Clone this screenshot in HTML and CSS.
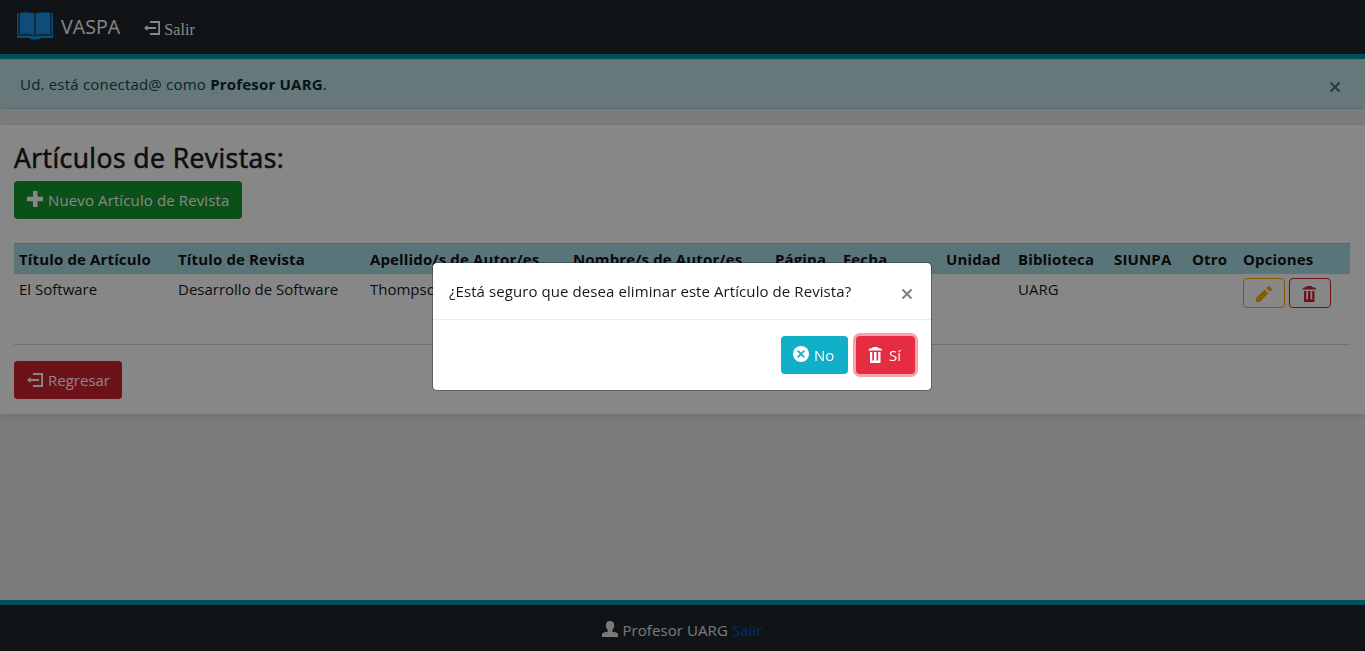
FILE: index.html
```html
<!DOCTYPE html>
<html lang="es">
<head>
<meta charset="utf-8">
<title>VASPA</title>
<link rel="stylesheet" href="styles.css">
</head>
<body>
<svg class="sprite" aria-hidden="true">
  <symbol id="i-exit" viewBox="0 0 16 16"><path d="M6 1h10v14H6v-2h8.200V3H6zM0 8l3.600-3v2H12v2H3.600v2z"/></symbol>
  <symbol id="i-trash" viewBox="0 0 16 16"><path d="M5 0h4.500l1 1.300H12q1.700.4 2.300 2.200H.2Q.8 1.700 2.500 1.300H4zM2 5h2.300v8.500h1.700V5h2.500v8.500h1.700V5h2.300v11H2z"/></symbol>
  <symbol id="i-plus" viewBox="0 0 16 16"><path d="M6 0h4.500v5.800H16v4.400h-5.500V16H6v-5.800H0V5.800h6z"/></symbol>
  <symbol id="i-pencil" viewBox="0 0 16 16"><path d="M0 12.200L8.700 3.500l3.800 3.800L3.800 16H0zM10.200 2l1.600-1.600q.8-.8 1.600 0L15.600 2.600q.8.800 0 1.600L14 5.800z"/></symbol>
  <symbol id="i-user" viewBox="0 0 16 16"><path d="M8 0c3 0 4.200 2 4.200 4.500 0 2-1 4-2.200 4.900v1.100c3 .6 6 1.200 6 3v2.500H0v-2.500c0-1.800 3-2.400 6-3V9.400C4.800 8.500 3.800 6.500 3.800 4.500 3.800 2 5 0 8 0z"/></symbol>
  <symbol id="i-cancel" viewBox="0 0 16 16"><circle cx="8" cy="8" r="8"/><path d="M4.700 4.700l6.600 6.600M11.300 4.700l-6.600 6.600" stroke="#10b0c8" stroke-width="1.800"/></symbol>
  <symbol id="i-times" viewBox="0 0 12 12"><path d="M1.500 1.500l9 9M10.500 1.500l-9 9" stroke="currentColor" stroke-width="2"/></symbol>
</svg>
<header class="navbar">
  <a class="brand">
    <svg class="book" viewBox="0 0 38 28"><path class="cover" d="M1 1h36v24H1z"/><path d="M1 1h1v23h34V1h1v25H24q0 1.500-2 1.500h-6q-2 0-2-1.500H1z"/><path d="M4 .8q9-1.500 14 1v21.400q-6-3-14-.5zM20 1.800q5-2.500 14-1v21.900q-8-2.500-14 .5z"/></svg>
    <span>VASPA</span>
  </a>
  <a class="nav-exit"><svg class="icon"><use href="#i-exit"/></svg><span>Salir</span></a>
</header>
<div class="alert">
  <p>Ud. está conectad@ como <b>Profesor UARG</b>.</p>
  <svg class="times"><use href="#i-times"/></svg>
</div>
<main class="card">
  <h1>Artículos de Revistas:</h1>
  <a class="btn success"><svg class="icon"><use href="#i-plus"/></svg><span>Nuevo Artículo de Revista</span></a>
  <table>
    <colgroup><col class="c1"><col class="c2"><col class="c3"><col class="c4"><col class="c5"><col class="c6"><col class="c7"><col class="c8"><col class="c9"><col class="c10"><col class="c11"></colgroup>
    <thead><tr><th>Título de Artículo</th><th>Título de Revista</th><th>Apellido/s de Autor/es</th><th>Nombre/s de Autor/es</th><th>Página</th><th>Fecha</th><th>Unidad</th><th>Biblioteca</th><th>SIUNPA</th><th>Otro</th><th>Opciones</th></tr></thead>
    <tbody><tr><td>El Software</td><td>Desarrollo de Software</td><td>Thompson</td><td></td><td></td><td></td><td></td><td>UARG</td><td></td><td></td>
      <td><div class="options"><a class="btn-sm edit"><svg class="icon"><use href="#i-pencil"/></svg></a><a class="btn-sm delete"><svg class="icon"><use href="#i-trash"/></svg></a></div></td></tr></tbody>
  </table>
  <a class="btn danger"><svg class="icon"><use href="#i-exit"/></svg><span>Regresar</span></a>
</main>
<footer class="footer"><svg class="icon"><use href="#i-user"/></svg><span>Profesor UARG <a>Salir</a></span></footer>
<div class="backdrop">
  <section class="modal" role="dialog">
    <div class="modal-header"><p>¿Está seguro que desea eliminar este Artículo de Revista?</p><svg class="times"><use href="#i-times"/></svg></div>
    <div class="modal-footer">
      <button class="btn info"><svg class="icon"><use href="#i-cancel"/></svg><span>No</span></button>
      <button class="btn danger focused"><svg class="icon"><use href="#i-trash"/></svg><span>Sí</span></button>
    </div>
  </section>
</div>
</body>
</html>
```
FILE: styles.css
```css
* { box-sizing: border-box; }
body {
  margin: 0;
  height: 651px;
  overflow: hidden;
  display: flex;
  flex-direction: column;
  background: #ebebeb;
  color: #16191c;
  font: 15px/24px "Open Sans", "Noto Sans", sans-serif;
}
p, h1 { margin: 0; }
svg { fill: currentColor; flex: none; }
.sprite { position: absolute; width: 0; height: 0; }
.icon { width: 16px; height: 16px; }
.times { width: 12px; height: 12px; }
.navbar {
  height: 59px;
  padding: 0 16px;
  display: flex;
  align-items: center;
  gap: 24px;
  background: #1f262a;
  border-bottom: 5px solid #0095a8;
  color: #fff;
}
.brand { display: flex; align-items: center; gap: 7px; font-size: 19.500px; letter-spacing: .1px; }
.book { width: 38px; height: 28px; color: #1b90e6; margin-bottom: 3px; }
.cover { fill: #1c4f7a; }
.nav-exit { display: flex; align-items: center; gap: 4px; font: 16px/24px "Liberation Serif", serif; padding-top: 6px; }
.nav-exit span { letter-spacing: .1px; }
.nav-exit .icon { margin-bottom: 5px; }
.alert {
  height: 50px;
  padding: 0 24px 0 20px;
  display: flex;
  align-items: center;
  justify-content: space-between;
  background: #c3e2e7;
  border: 1px solid #9fd0d9;
  border-width: 1px 0;
  border-radius: 4px;
  color: #0c4a55;
  letter-spacing: .2px;
}
.alert .times { margin-top: 6px; color: #4f7076; }
.alert b { color: #062c33; }
.card {
  height: 289px;
  margin-top: 16px;
  padding: 16px 15px 0 14px;
  background: #fff;
  box-shadow: 0 2px 8px rgba(0, 0, 0, .13);
}
h1 {
  font-size: 26.500px;
  line-height: 34px;
  font-weight: 500;
  letter-spacing: .45px;
  -webkit-text-stroke: .6px;
  margin-bottom: 6px;
}
.btn {
  display: inline-flex;
  align-items: center;
  gap: 5px;
  height: 38px;
  padding: 0 13px;
  border: 0;
  border-radius: 4px;
  color: #fff;
  font: inherit;
  white-space: nowrap;
}
.card > .btn { vertical-align: top; }
.btn .icon { margin-bottom: 2px; }
.danger .icon { margin-bottom: 1px; }
.success { background: #169530; width: 228px; letter-spacing: .12px; }
.danger { background: #d02232; width: 108px; }
.info { background: #10b0c8; width: 67px; }
.modal-footer .btn { padding: 0 12px; }
table {
  table-layout: fixed;
  width: 1336px;
  border-collapse: separate;
  border-spacing: 0;
  margin: 24px 0 16px;
}
.c1 { width: 159px; }
.c2 { width: 192px; }
.c3 { width: 203px; }
.c4 { width: 202px; }
.c5 { width: 68px; }
.c6 { width: 103px; }
.c7 { width: 72px; }
.c8 { width: 96px; }
.c9 { width: 78px; }
.c10 { width: 51px; }
.c11 { width: 112px; }
th, td { padding: 3px 5px; text-align: left; vertical-align: top; white-space: nowrap; }
th {
  height: 31px;
  color: #111;
  background: #abdde5;
  border-top: 1px solid #a0c9d0;
  letter-spacing: .14px;
}
td { height: 71px; border-bottom: 1px solid #d4d7da; }
.options { display: flex; gap: 4px; padding-top: 1px; }
.btn-sm { width: 42px; height: 30px; display: grid; place-items: center; padding-top: 2px; border: 1px solid; border-radius: 4px; }
.edit { color: #ffaa00; }
.delete { color: #d02232; }
.footer {
  height: 51px;
  padding-top: 4px;
  margin-top: auto;
  display: flex;
  justify-content: center;
  align-items: center;
  gap: 4px;
  background: #1f262a;
  border-top: 5px solid #0095a8;
  color: #e4e4e4;
  letter-spacing: .08px;
}
.footer .icon { margin-bottom: 3px; }
.footer a { color: #0b4fd0; }
.backdrop {
  position: fixed;
  inset: 0;
  display: flex;
  justify-content: center;
  align-items: flex-start;
  padding-top: 262px;
  background: rgba(0, 0, 0, .47);
}
.modal {
  width: 500px;
  height: 129px;
  margin-right: 1px;
  background: #fff;
  background-clip: padding-box;
  border: 1px solid rgba(0, 0, 0, .3);
  border-radius: 5px;
}
.modal-header {
  height: 57px;
  padding: 0 18px 0 16px;
  display: flex;
  align-items: center;
  justify-content: space-between;
  border-bottom: 1px solid #e9ecef;
  letter-spacing: .08px;
}
.modal-header .times { color: #808080; margin-top: 5px; }
.modal-footer { display: flex; justify-content: flex-end; gap: 8px; padding: 16px; }
.modal-footer .danger { width: 59px; background: #e62c40; }
.focused { box-shadow: 0 0 0 3px #f3a5ae; }
```
